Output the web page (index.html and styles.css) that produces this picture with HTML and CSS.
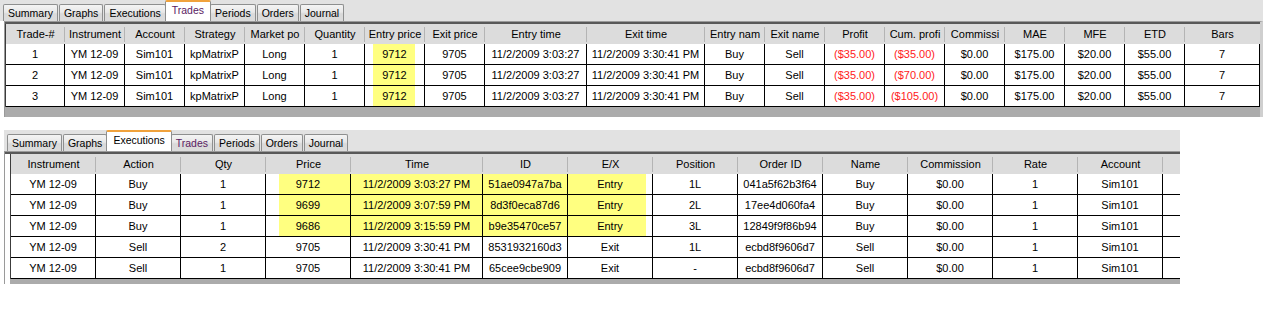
FILE: index.html
```html
<!DOCTYPE html>
<html lang="en">
<head>
  <meta charset="UTF-8">
  <title>Strategy Analyzer</title>
  <link rel="stylesheet" href="styles.css">
</head>
<body>
  <div class="panel trades-panel">
    <div class="tabs">
      <span class="tab">Summary</span>
      <span class="tab">Graphs</span>
      <span class="tab">Executions</span>
      <span class="tab active purple">Trades</span>
      <span class="tab">Periods</span>
      <span class="tab">Orders</span>
      <span class="tab">Journal</span>
    </div>
    <div class="frame">
      <div class="body">
        <table class="grid">
          <colgroup>
            <col style="width:59px">
            <col style="width:60px"><col style="width:60px"><col style="width:60px"><col style="width:60px">
            <col style="width:60px"><col style="width:60px"><col style="width:60px">
            <col style="width:102px"><col style="width:118px">
            <col style="width:60px"><col style="width:60px"><col style="width:60px"><col style="width:60px">
            <col style="width:60px"><col style="width:60px"><col style="width:60px"><col style="width:60px">
            <col style="width:75px">
          </colgroup>
          <thead>
            <tr>
              <th>Trade-#</th><th>Instrument</th><th>Account</th><th>Strategy</th><th>Market po</th>
              <th>Quantity</th><th>Entry price</th><th>Exit price</th><th>Entry time</th><th>Exit time</th>
              <th>Entry nam</th><th>Exit name</th><th>Profit</th><th>Cum. profi</th><th>Commissi</th>
              <th>MAE</th><th>MFE</th><th>ETD</th><th class="last">Bars</th>
            </tr>
          </thead>
          <tbody>
            <tr>
              <td>1</td><td>YM 12-09</td><td>Sim101</td><td>kpMatrixP</td><td>Long</td><td>1</td>
              <td class="hl-entry">9712</td><td>9705</td><td>11/2/2009 3:03:27</td><td>11/2/2009 3:30:41 PM</td>
              <td>Buy</td><td>Sell</td><td class="loss">($35.00)</td><td class="loss">($35.00)</td>
              <td>$0.00</td><td>$175.00</td><td>$20.00</td><td>$55.00</td><td>7</td>
            </tr>
            <tr>
              <td>2</td><td>YM 12-09</td><td>Sim101</td><td>kpMatrixP</td><td>Long</td><td>1</td>
              <td class="hl-entry">9712</td><td>9705</td><td>11/2/2009 3:03:27</td><td>11/2/2009 3:30:41 PM</td>
              <td>Buy</td><td>Sell</td><td class="loss">($35.00)</td><td class="loss">($70.00)</td>
              <td>$0.00</td><td>$175.00</td><td>$20.00</td><td>$55.00</td><td>7</td>
            </tr>
            <tr>
              <td>3</td><td>YM 12-09</td><td>Sim101</td><td>kpMatrixP</td><td>Long</td><td>1</td>
              <td class="hl-entry">9712</td><td>9705</td><td>11/2/2009 3:03:27</td><td>11/2/2009 3:30:41 PM</td>
              <td>Buy</td><td>Sell</td><td class="loss">($35.00)</td><td class="loss">($105.00)</td>
              <td>$0.00</td><td>$175.00</td><td>$20.00</td><td>$55.00</td><td>7</td>
            </tr>
          </tbody>
        </table>
        <div class="foot"></div>
      </div>
    </div>
  </div>

  <div class="panel exec-panel">
    <div class="tabs">
      <span class="tab">Summary</span>
      <span class="tab">Graphs</span>
      <span class="tab active">Executions</span>
      <span class="tab purple">Trades</span>
      <span class="tab">Periods</span>
      <span class="tab">Orders</span>
      <span class="tab">Journal</span>
    </div>
    <div class="frame">
      <div class="body">
        <table class="grid">
          <colgroup>
            <col style="width:85px"><col style="width:85px"><col style="width:85px"><col style="width:85px">
            <col style="width:132px">
            <col style="width:85px"><col style="width:85px"><col style="width:85px"><col style="width:85px">
            <col style="width:85px"><col style="width:85px"><col style="width:85px"><col style="width:85px">
            <col style="width:17px">
          </colgroup>
          <thead>
            <tr>
              <th>Instrument</th><th>Action</th><th>Qty</th><th>Price</th><th>Time</th><th>ID</th>
              <th>E/X</th><th>Position</th><th>Order ID</th><th>Name</th><th>Commission</th>
              <th>Rate</th><th>Account</th><th class="last"></th>
            </tr>
          </thead>
          <tbody>
            <tr>
              <td>YM 12-09</td><td>Buy</td><td>1</td><td class="hl-start">9712</td>
              <td class="hl">11/2/2009 3:03:27 PM</td><td class="hl">51ae0947a7ba</td><td class="hl-end">Entry</td>
              <td>1L</td><td>041a5f62b3f64</td><td>Buy</td><td>$0.00</td><td>1</td><td>Sim101</td><td class="fill"></td>
            </tr>
            <tr>
              <td>YM 12-09</td><td>Buy</td><td>1</td><td class="hl-start">9699</td>
              <td class="hl">11/2/2009 3:07:59 PM</td><td class="hl">8d3f0eca87d6</td><td class="hl-end">Entry</td>
              <td>2L</td><td>17ee4d060fa4</td><td>Buy</td><td>$0.00</td><td>1</td><td>Sim101</td><td class="fill"></td>
            </tr>
            <tr>
              <td>YM 12-09</td><td>Buy</td><td>1</td><td class="hl-start">9686</td>
              <td class="hl">11/2/2009 3:15:59 PM</td><td class="hl">b9e35470ce57</td><td class="hl-end">Entry</td>
              <td>3L</td><td>12849f9f86b94</td><td>Buy</td><td>$0.00</td><td>1</td><td>Sim101</td><td class="fill"></td>
            </tr>
            <tr>
              <td>YM 12-09</td><td>Sell</td><td>2</td><td>9705</td>
              <td>11/2/2009 3:30:41 PM</td><td>8531932160d3</td><td>Exit</td>
              <td>1L</td><td>ecbd8f9606d7</td><td>Sell</td><td>$0.00</td><td>1</td><td>Sim101</td><td class="fill"></td>
            </tr>
            <tr>
              <td>YM 12-09</td><td>Sell</td><td>1</td><td>9705</td>
              <td>11/2/2009 3:30:41 PM</td><td>65cee9cbe909</td><td>Exit</td>
              <td>-</td><td>ecbd8f9606d7</td><td>Sell</td><td>$0.00</td><td>1</td><td>Sim101</td><td class="fill"></td>
            </tr>
          </tbody>
        </table>
        <div class="foot"></div>
      </div>
    </div>
  </div>
</body>
</html>
```

FILE: styles.css
```css
*{margin:0;padding:0;box-sizing:border-box;}
body{background:#fff;color:#000;font-family:"Liberation Sans",Arial,sans-serif;}

/* tab strip */
.tabs{display:flex;align-items:flex-end;height:21px;padding-left:3px;background:#e2e2e2;}
.tab{height:17px;margin-right:1px;padding:0 4px;border:1px solid #8e8f8f;border-bottom:0;border-radius:2px 2px 0 0;background:linear-gradient(#f4f4f4,#e8e8e8 45%,#d9d9d9 55%,#dcdcdc);font-size:10.5px;line-height:16px;white-space:nowrap;}
.tab.active{z-index:1;height:21px;margin:0 -1px 0 -2px;padding:0 6px;border-top:2px solid #f0a23c;background:#fff;line-height:16px;}
.tab.purple{color:#5a1a62;}

/* panels */
.trades-panel{width:1263px;}
.trades-panel .frame{margin-left:4px;border-right:3px solid #cfcfcf;}
.exec-panel{width:1176px;margin:13px 0 0 4px;}
.exec-panel .body{padding-left:5px;}
.frame{border-top:1px solid #9a9a9a;border-left:1px solid #9a9a9a;}
.body{border-top:2px solid #585858;}
.foot{height:10px;background:#ababab;}
.exec-panel .foot{height:5px;}

/* grid */
.grid{border-collapse:separate;border-spacing:0;table-layout:fixed;border-left:1px solid #3c3c3c;}
.grid th,.grid td{overflow:hidden;white-space:nowrap;text-align:center;font-size:11px;}
.grid th{height:20px;padding:0 2px;font-weight:normal;background:linear-gradient(#b4b4b4,#b4b4b4) right 3px / 1px 15px no-repeat #dcdcdc;}
.grid th.last{background:#dcdcdc;}
.grid td{height:21px;padding:0 1px;border-right:1px solid #000;border-bottom:1px solid #000;background:#fff;}
.grid td.fill{border-right:0;}
.loss{color:#ff1a1a;}

/* highlighted cells */
.hl-entry{background:linear-gradient(to right,#fff 8px,#ffff80 8px,#ffff80 50px,#fff 50px) !important;}
.hl{background:#ffff80 !important;}
.hl-start{background:linear-gradient(to right,#fff 13px,#ffff80 13px) !important;}
.hl-end{background:linear-gradient(to right,#ffff80 78px,#fff 78px) !important;}
```
